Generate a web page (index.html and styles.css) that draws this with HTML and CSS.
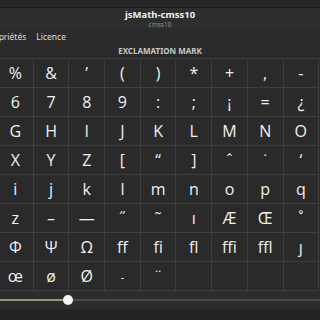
FILE: index.html
```html
<!DOCTYPE html>
<html>
<head>
<meta charset="utf-8">
<link rel="stylesheet" href="styles.css">
</head>
<body>
<div class="app">
  <div class="topstrip"></div>
  <header class="header">
    <div class="title">jsMath-cmss10</div>
    <div class="subtitle">cmss10</div>
  </header>
  <nav class="tabs">
    <span class="tab">Propriétés</span>
    <span class="tab">Licence</span>
  </nav>
  <div class="charname">EXCLAMATION MARK</div>
  <div class="grid">
    <div class="cell">%</div><div class="cell">&amp;</div><div class="cell">’</div><div class="cell">(</div><div class="cell">)</div><div class="cell">*</div><div class="cell">+</div><div class="cell">,</div><div class="cell">-</div>
    <div class="cell">6</div><div class="cell">7</div><div class="cell">8</div><div class="cell">9</div><div class="cell">:</div><div class="cell">;</div><div class="cell">¡</div><div class="cell">=</div><div class="cell">¿</div>
    <div class="cell">G</div><div class="cell">H</div><div class="cell">I</div><div class="cell">J</div><div class="cell">K</div><div class="cell">L</div><div class="cell">M</div><div class="cell">N</div><div class="cell">O</div>
    <div class="cell">X</div><div class="cell">Y</div><div class="cell">Z</div><div class="cell">[</div><div class="cell">“</div><div class="cell">]</div><div class="cell">ˆ</div><div class="cell">˙</div><div class="cell">‘</div>
    <div class="cell">i</div><div class="cell">j</div><div class="cell">k</div><div class="cell">l</div><div class="cell">m</div><div class="cell">n</div><div class="cell">o</div><div class="cell">p</div><div class="cell">q</div>
    <div class="cell">z</div><div class="cell">–</div><div class="cell">—</div><div class="cell">˝</div><div class="cell">˜</div><div class="cell">ı</div><div class="cell">Æ</div><div class="cell">Œ</div><div class="cell">˚</div>
    <div class="cell">Φ</div><div class="cell">Ψ</div><div class="cell">Ω</div><div class="cell">ff</div><div class="cell">fi</div><div class="cell">fl</div><div class="cell">ffi</div><div class="cell">ffl</div><div class="cell">ȷ</div>
    <div class="cell">œ</div><div class="cell">ø</div><div class="cell">Ø</div><div class="cell small">-</div><div class="cell">¨</div><div class="cell"></div><div class="cell"></div><div class="cell"></div><div class="cell"></div>
  </div>
  <div class="sliderbar">
    <div class="track">
      <div class="fill"></div>
      <div class="knob"></div>
    </div>
  </div>
  <div class="bottom"></div>
</div>
</body>
</html>
```

FILE: styles.css
```css
html, body {
  margin: 0;
  padding: 0;
  background: #2a2a2a;
  overflow: hidden;
}
.app {
  width: 320px;
  height: 320px;
  display: flex;
  flex-direction: column;
  font-family: "Noto Sans", "Open Sans", sans-serif;
  color: #eeeeee;
  overflow: hidden;
}
.topstrip {
  height: 7px;
  background: #262626;
  border-bottom: 1px solid #1b1b1b;
}
.header {
  height: 21px;
  background: #2e2e2e;
  display: flex;
  flex-direction: column;
  align-items: center;
  justify-content: center;
}
.title {
  font-size: 9.5px;
  font-weight: bold;
  line-height: 12px;
  color: #f0f0f0;
}
.subtitle {
  font-size: 6.5px;
  line-height: 8px;
  color: #8e8e8e;
}
.tabs {
  height: 15px;
  background: #2b2b2b;
  display: flex;
  gap: 10px;
  align-items: center;
  margin-left: -15px;
  font-size: 8.5px;
  color: #dddddd;
}
.charname {
  height: 14px;
  line-height: 14px;
  text-align: center;
  font-size: 8px;
  font-weight: bold;
  color: #c8c8c8;
  background: #2a2a2a;
}
.grid {
  margin-left: -2px;
  display: grid;
  grid-template-columns: repeat(9, 35.7px);
  grid-auto-rows: 29px;
  border-top: 1px solid #3e3e3e;
  width: 330px;
}
.cell {
  border-right: 1px solid #3e3e3e;
  border-bottom: 1px solid #3e3e3e;
  display: flex;
  align-items: center;
  justify-content: center;
  font-family: "Open Sans", "Noto Sans", sans-serif;
  font-size: 16px;
  color: #f0f0f0;
  background: #2a2a2a;
}
.cell.small {
  font-size: 11px;
}
.sliderbar {
  height: 18px;
  background: #2c2c2c;
  display: flex;
  align-items: center;
}
.track {
  position: relative;
  width: 100%;
  height: 2px;
  background: #4a4a4a;
}
.fill {
  width: 68px;
  height: 2px;
  background: #8f9b6e;
}
.knob {
  position: absolute;
  left: 63px;
  top: -4px;
  width: 10px;
  height: 10px;
  border-radius: 50%;
  background: #f4f4f4;
}
.bottom {
  flex: 1;
  background: #232323;
}
```
